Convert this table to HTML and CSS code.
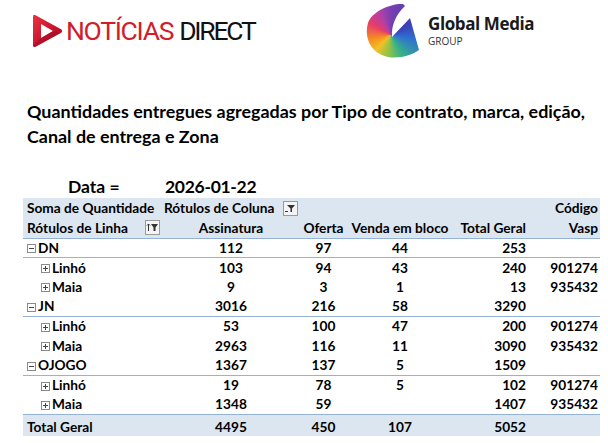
FILE: index.html
```html
<!DOCTYPE html>
<html lang="pt">
<head>
<meta charset="utf-8">
<title>Quantidades entregues</title>
<link rel="stylesheet" href="styles.css">
</head>
<body>
<header class="logos">
  <div class="nd-logo">
    <svg class="nd-icon" width="30" height="34" viewBox="0 0 30 34">
      <defs>
        <linearGradient id="ndg" x1="0" y1="0" x2="1" y2="1">
          <stop offset="0" stop-color="#e8343f"/>
          <stop offset="0.6" stop-color="#c8102e"/>
          <stop offset="1" stop-color="#8e0b1e"/>
        </linearGradient>
      </defs>
      <path fill="url(#ndg)" fill-rule="evenodd" d="M2,1 Q0,0 0,3 L0,31 Q0,34 3,32.5 L28.5,18.5 Q30,17 28.5,15.5 L3,1.5 Z M8,10 L8,24 L20,17 Z"/>
      <path fill="#a50d22" d="M0,31 L8,24 L20,17 L28.5,18.5 L3,32.5 Q0,34 0,31 Z" opacity="0.55"/>
    </svg>
    <span class="nd-red">NOTÍCIAS</span><span class="nd-black">DIRECT</span>
  </div>
  <div class="gm-logo">
    <div class="gm-icon"></div>
    <div class="gm-text">
      <span class="gm-name">Global Media</span>
      <span class="gm-group">GROUP</span>
    </div>
  </div>
</header>

<h1 class="title">Quantidades entregues agregadas por Tipo de contrato, marca, edição, Canal de entrega e Zona</h1>

<div class="date-row">
  <span class="date-label">Data =</span>
  <span class="date-value">2026-01-22</span>
</div>

<table class="pivot">
  <colgroup>
    <col class="c1"><col class="c2"><col class="c3"><col class="c4"><col class="c5"><col class="c6">
  </colgroup>
  <thead>
    <tr class="hdr">
      <th class="left">Soma de Quantidade</th>
      <th class="left"><span class="with-icon">Rótulos de Coluna <span class="fbtn"><svg width="13" height="13" viewBox="0 0 13 13"><path d="M3,3 H11 L8,6.5 V10 H6.5 V6.5 Z" fill="#333"/><rect x="1" y="9" width="3" height="1" fill="#333"/></svg></span></span></th>
      <th></th><th></th><th></th>
      <th class="right">Código</th>
    </tr>
    <tr class="hdr hdr2">
      <th class="left"><span class="with-icon">Rótulos de Linha <span class="fbtn"><svg width="13" height="13" viewBox="0 0 13 13"><path d="M2.5,3 V10 M1,4.5 L2.5,3 L4,4.5" stroke="#333" stroke-width="1" fill="none"/><path d="M5,3 H12 L9.5,6.5 V10 H7.5 V6.5 Z" fill="#333"/></svg></span></span></th>
      <th class="center">Assinatura</th>
      <th class="center">Oferta</th>
      <th class="center">Venda em bloco</th>
      <th class="right">Total Geral</th>
      <th class="right">Vasp</th>
    </tr>
  </thead>
  <tbody>
    <tr class="grp"><td><span class="tog minus"></span>DN</td><td class="center">112</td><td class="center">97</td><td class="center">44</td><td class="right">253</td><td class="right"></td></tr>
    <tr><td class="sub"><span class="tog plus"></span>Linhó</td><td class="center">103</td><td class="center">94</td><td class="center">43</td><td class="right">240</td><td class="right">901274</td></tr>
    <tr><td class="sub"><span class="tog plus"></span>Maia</td><td class="center">9</td><td class="center">3</td><td class="center">1</td><td class="right">13</td><td class="right">935432</td></tr>
    <tr class="grp"><td><span class="tog minus"></span>JN</td><td class="center">3016</td><td class="center">216</td><td class="center">58</td><td class="right">3290</td><td class="right"></td></tr>
    <tr><td class="sub"><span class="tog plus"></span>Linhó</td><td class="center">53</td><td class="center">100</td><td class="center">47</td><td class="right">200</td><td class="right">901274</td></tr>
    <tr><td class="sub"><span class="tog plus"></span>Maia</td><td class="center">2963</td><td class="center">116</td><td class="center">11</td><td class="right">3090</td><td class="right">935432</td></tr>
    <tr class="grp"><td><span class="tog minus"></span>OJOGO</td><td class="center">1367</td><td class="center">137</td><td class="center">5</td><td class="right">1509</td><td class="right"></td></tr>
    <tr><td class="sub"><span class="tog plus"></span>Linhó</td><td class="center">19</td><td class="center">78</td><td class="center">5</td><td class="right">102</td><td class="right">901274</td></tr>
    <tr><td class="sub"><span class="tog plus"></span>Maia</td><td class="center">1348</td><td class="center">59</td><td class="center"></td><td class="right">1407</td><td class="right">935432</td></tr>
  </tbody>
  <tfoot>
    <tr class="total"><td>Total Geral</td><td class="center">4495</td><td class="center">450</td><td class="center">107</td><td class="right">5052</td><td class="right"></td></tr>
  </tfoot>
</table>
</body>
</html>
```

FILE: styles.css
```css
* { box-sizing: border-box; }
html, body { margin: 0; padding: 0; background: #ffffff; }
body {
  width: 608px;
  height: 443px;
  overflow: hidden;
  font-family: Lato, "Liberation Sans", sans-serif;
  color: #000;
}

.logos {
  display: flex;
  align-items: flex-start;
  height: 62px;
}

.nd-logo {
  display: flex;
  align-items: center;
  width: 333px;
  margin-left: 33px;
  margin-top: 14px;
  height: 34px;
}
.nd-icon { display: block; margin-right: 3px; }
.nd-red, .nd-black {
  font-family: Roboto, "Liberation Sans", sans-serif;
  font-weight: 400;
  font-size: 26.5px;
  line-height: 34px;
}
.nd-red { color: #d21d2a; margin-right: 6px; letter-spacing: -1.3px; }
.nd-black { color: #111; letter-spacing: -2.2px; }

.gm-logo {
  display: flex;
  align-items: flex-start;
  margin-top: 3px;
}
.gm-icon {
  width: 55px;
  height: 55px;
  background: conic-gradient(from 0deg at 45% 58%, #7a3fb0 0deg, #3a3fb8 60deg, #2f6fd0 100deg, #36b08a 150deg, #8bc34a 185deg, #f3c025 225deg, #f58a23 260deg, #e63c6a 300deg, #b03fa8 335deg, #7a3fb0 360deg);
  clip-path: path("M37,1 C26,0 6,8 2,20 C-2,34 4,50 22,54 C34,56 46,52 53,47 L44,15 L26,34 C25,23 30,11 39,3 Z");
}
.gm-text {
  display: flex;
  flex-direction: column;
  margin-left: 7px;
  margin-top: 10px;
}
.gm-name {
  font-family: "Open Sans", sans-serif;
  font-weight: 700;
  font-size: 17px;
  line-height: 22px;
  letter-spacing: -0.4px;
  color: #1a1a1a;
}
.gm-group {
  font-family: "Open Sans", sans-serif;
  font-size: 10px;
  line-height: 12px;
  color: #333;
}

.title {
  margin: 37px 0 0 27px;
  width: 580px;
  font-size: 17.9px;
  line-height: 25px;
  font-weight: 700;
}

.date-row {
  display: flex;
  margin: 26px 0 0 68px;
  height: 23px;
  align-items: center;
  font-weight: 700;
  font-size: 17.5px;
}
.date-label { width: 97px; }
.date-value { letter-spacing: -0.3px; }

.pivot {
  margin-left: 23px;
  border-collapse: collapse;
  table-layout: fixed;
  width: 577px;
  font-size: 13.7px;
  font-weight: 700;
}
.c1 { width: 139px; }
.c2 { width: 138px; }
.c3 { width: 47px; }
.c4 { width: 106px; }
.c5 { width: 75px; }
.c6 { width: 72px; }

.pivot th, .pivot td {
  height: 19.6px;
  padding: 0 2px;
  white-space: nowrap;
  font-weight: 700;
  line-height: 18px;
}
.pivot .left { text-align: left; }
.pivot .center { text-align: center; }
.pivot .right { text-align: right; }

.hdr th { background: #dce6f1; height: 20px; }
.hdr2 th { border-bottom: 1px solid #95b3d7; }
.hdr th:first-child, .pivot td:first-child { padding-left: 4px; text-align: left; }

.with-icon { display: flex; align-items: center; justify-content: space-between; }
.fbtn {
  display: inline-flex;
  align-items: center;
  justify-content: center;
  width: 15px;
  height: 15px;
  border: 1px solid #9a9a9a;
  background: #f4f4f4;
}
.fbtn svg { display: block; }

.grp td { border-bottom: 1px solid #95b3d7; }
.pivot td.sub { padding-left: 18px; }

.tog {
  display: inline-block;
  position: relative;
  width: 9px;
  height: 9px;
  border: 1px solid #8a8a8a;
  margin-right: 2px;
  vertical-align: -0.5px;
  background: #fff;
}
.tog::before {
  content: "";
  position: absolute;
  left: 1px; right: 1px; top: 3px;
  height: 1px;
  background: #444;
}
.tog.plus::after {
  content: "";
  position: absolute;
  top: 1px; bottom: 1px; left: 3px;
  width: 1px;
  background: #444;
}

.pivot .total td {
  height: 22px;
  padding-top: 2px;
  background: #dce6f1;
  border-top: 1px solid #95b3d7;
}
```
